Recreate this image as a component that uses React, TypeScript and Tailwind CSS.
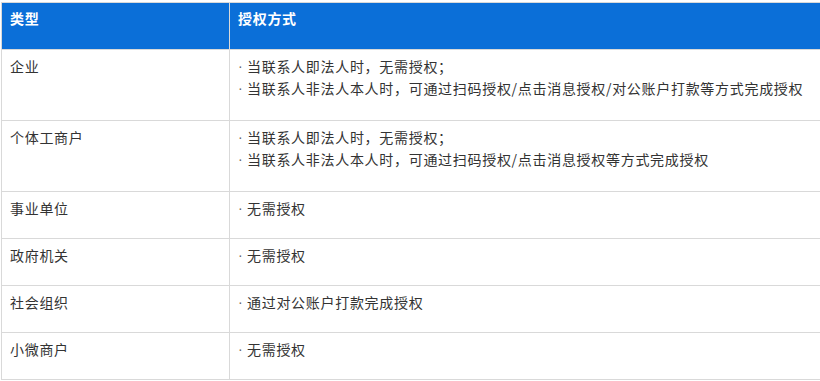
const rows: { type: string; ways: string[] }[] = [
  {
    type: '企业',
    ways: ['当联系人即法人时，无需授权；', '当联系人非法人本人时，可通过扫码授权/点击消息授权/对公账户打款等方式完成授权'],
  },
  {
    type: '个体工商户',
    ways: ['当联系人即法人时，无需授权；', '当联系人非法人本人时，可通过扫码授权/点击消息授权等方式完成授权'],
  },
  { type: '事业单位', ways: ['无需授权'] },
  { type: '政府机关', ways: ['无需授权'] },
  { type: '社会组织', ways: ['通过对公账户打款完成授权'] },
  { type: '小微商户', ways: ['无需授权'] },
];

export default function App() {
  return (
    <div
      className="h-[381px] w-[820px] overflow-hidden bg-white pl-px pt-[2px] text-[14px] text-[#333] tracking-[0.7px]"
      style={{ fontFamily: '"Noto Sans CJK SC", "Noto Sans", sans-serif' }}
    >
      <table className="w-[830px] border-collapse">
        <thead>
          <tr className="bg-[#0b6fd8] text-white">
            <th className="h-[47px] w-[228px] border border-[#d9d9d9] px-2 pb-[18px] pt-[4px] text-left align-top font-bold leading-[22px]">
              类型
            </th>
            <th className="h-[47px] border border-[#d9d9d9] px-2 pb-[18px] pt-[4px] text-left align-top font-bold leading-[22px]">
              授权方式
            </th>
          </tr>
        </thead>
        <tbody>
          {rows.map((r) => {
            const pad = r.ways.length > 1 ? 'pt-[5px] pb-[21px]' : 'pt-[5px] pb-[19px]';
            return (
              <tr key={r.type}>
                <td className={`border border-[#d9d9d9] px-2 align-top leading-[22px] ${pad}`}>{r.type}</td>
                <td className={`border border-[#d9d9d9] pl-[8px] pr-2 align-top leading-[22px] ${pad}`}>
                  {r.ways.map((w) => (
                    <div key={w} className="flex whitespace-nowrap">
                      <span className="w-[9px] shrink-0 font-['Liberation_Sans',sans-serif] tracking-normal text-[#666]">·</span>
                      <span>{w}</span>
                    </div>
                  ))}
                </td>
              </tr>
            );
          })}
        </tbody>
      </table>
    </div>
  );
}
